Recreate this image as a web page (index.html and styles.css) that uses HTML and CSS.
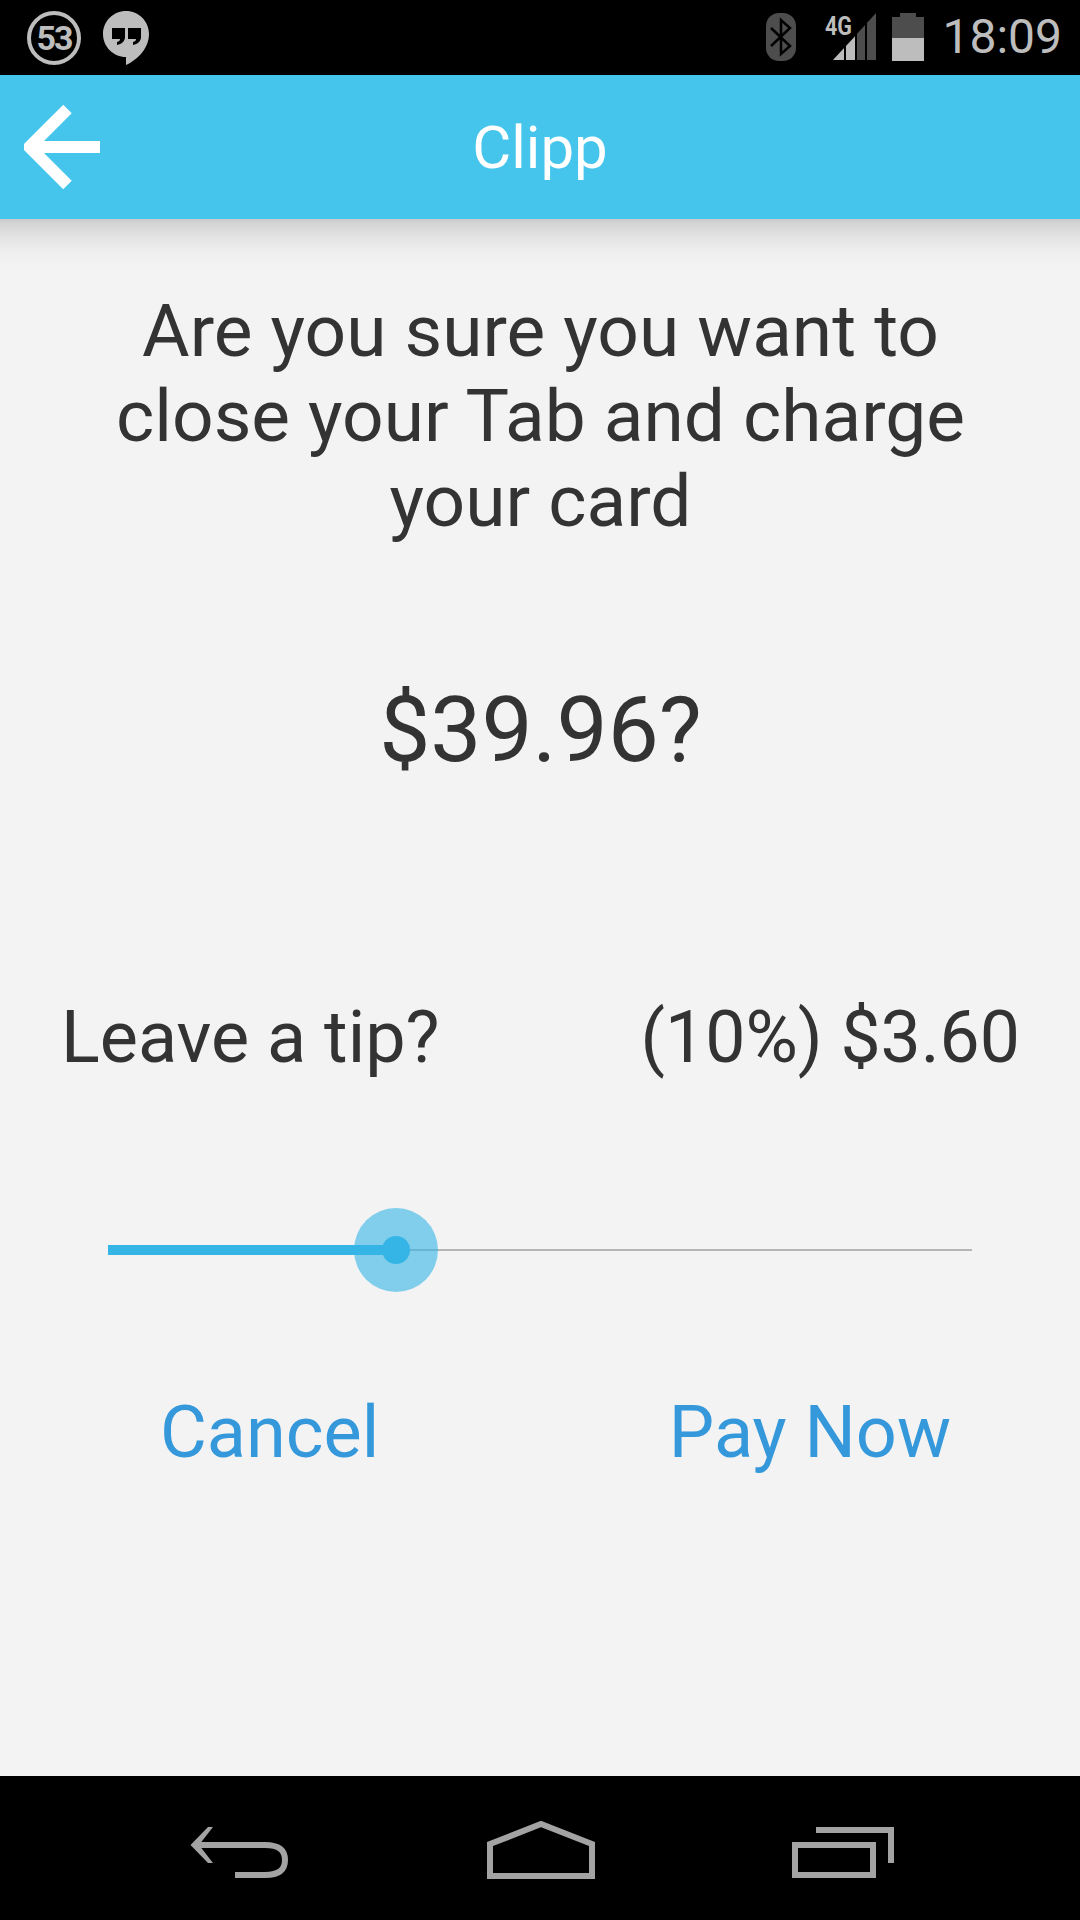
FILE: index.html
```html
<!DOCTYPE html>
<html lang="en">
<head>
    <meta charset="UTF-8" name="viewport" content="width=device-width, initial-scale=1.0">
    <title>Clipp</title>
    <link rel="stylesheet" href="styles.css">
</head>
<body>
<div class="phone">
    <!-- Status bar -->
    <div class="status-bar">
        <div class="notif-count">53</div>
        <svg class="hangouts" width="46" height="54" viewBox="0 0 46 54">
            <path fill="#bdbdbd" d="M23 0C10.300 0 0 10.300 0 23s10.300 23 23 23v8c12-5.500 23-17 23-31C46 10.300 35.700 0 23 0z"/>
            <path fill="#000" d="M9 17h13v9c0 4-3 7-8 8v-3c2-.5 3-1.500 3-3H9zM25 17h13v9c0 4-3 7-8 8v-3c2-.5 3-1.500 3-3h-8z"/>
        </svg>
        <div class="status-right">
            <svg class="bluetooth" width="30" height="48" viewBox="0 0 30 48">
                <rect width="30" height="48" rx="13" fill="#4d4d4d"/>
                <path fill="none" stroke="#000" stroke-width="2.500" d="M5 15l19 18-9 8V7l9 8-19 18"/>
            </svg>
            <svg class="signal" width="52" height="48" viewBox="0 0 52 48">
                <text class="net-type" x="1" y="22" textLength="27" lengthAdjust="spacingAndGlyphs">4G</text>
                <path fill="#4d4d4d" d="M52 0v47H9z"/>
                <path fill="#bdbdbd" d="M9 47l22-23.500V47z"/>
                <path fill="#000" d="M20 22h2v26h-2zM31 14h2v34h-2zM41 6h2v42h-2z"/>
            </svg>
            <svg class="battery" width="32" height="48" viewBox="0 0 32 48">
                <path fill="#4d4d4d" d="M8 0h16v4h8v21H0V4h8z"/>
                <rect y="25" width="32" height="23" fill="#bdbdbd"/>
            </svg>
            <div class="clock">18:09</div>
        </div>
    </div>

    <!-- Header -->
    <div class="app-header">
        <svg class="back-arrow" width="76" height="86" viewBox="0 0 76 86">
            <path fill="none" stroke="#fff" stroke-width="12" d="M43.500 5L5.500 43l38 38M5.500 43H76"/>
        </svg>
        <div class="app-title">Clipp</div>
    </div>

    <!-- Main content -->
    <div class="content">
        <p class="question">Are you sure you want to close your Tab and charge your card</p>
        <p class="amount">$39.96?</p>
        <div class="tip-row">
            <span>Leave a tip?</span>
            <span class="tip-value">(10%) $3.60</span>
        </div>
        <div class="slider">
            <div class="slider-fill"></div>
            <div class="slider-rest"></div>
            <div class="slider-knob">
                <div class="slider-dot"></div>
            </div>
        </div>
        <div class="actions">
            <button class="action-btn">Cancel</button>
            <button class="action-btn">Pay Now</button>
        </div>
    </div>

    <!-- Nav bar -->
    <div class="nav-bar">
        <svg class="nav-low" width="100" height="51" viewBox="0 0 100 51">
            <path fill="none" stroke="#a3a3a3" stroke-width="6" d="M45 48h30c14 0 20-5 20-15s-6-15-20-15H6"/>
            <path fill="#a3a3a3" d="M18 0h5L9 18l14 18h-5L.5 18z"/>
        </svg>
        <svg width="108" height="58" viewBox="0 0 108 58">
            <path fill="none" stroke="#a3a3a3" stroke-width="6" d="M3 55V23L54 3l51 20v32z"/>
        </svg>
        <svg class="nav-low" width="102" height="51" viewBox="0 0 102 51">
            <path fill="none" stroke="#a3a3a3" stroke-width="6" d="M3 18h78v30H3zM24 3h75v33"/>
        </svg>
    </div>
</div>
</body>
</html>
```

FILE: styles.css
```css
* {
    padding: 0;
    margin: 0;
    box-sizing: border-box;
    font-family: "Roboto", sans-serif;
}

body {
    width: 1080px;
    height: 1920px;
    background-color: #f3f3f4;
}

.phone {
    height: 1920px;
    display: flex;
    flex-direction: column;
}

.status-bar {
    height: 75px;
    flex-shrink: 0;
    background-color: #000;
    display: flex;
    align-items: flex-start;
    padding: 11px 18px 0 27px;
}

.notif-count {
    width: 54px;
    height: 54px;
    border: 4px solid #bdbdbd;
    border-radius: 50%;
    color: #bdbdbd;
    font-size: 34px;
    font-weight: 700;
    letter-spacing: -2px;
    line-height: 46px;
    text-align: center;
}

.hangouts {
    margin-left: 22px;
}

.status-right {
    margin-left: auto;
    display: flex;
    align-items: flex-start;
    padding-top: 2px;
}

.signal {
    margin-left: 28px;
}

.net-type {
    font-family: "Roboto", sans-serif;
    font-size: 25px;
    font-weight: 700;
    fill: #bdbdbd;
}

.battery {
    margin-left: 16px;
}

.clock {
    margin-left: 18px;
    color: #bdbdbd;
    font-size: 48px;
    line-height: 48px;
}

.app-header {
    height: 144px;
    flex-shrink: 0;
    background-color: #46c5ec;
    position: relative;
    display: flex;
    align-items: center;
    justify-content: center;
}

/* Shadow under the header */
.app-header::after {
    content: "";
    position: absolute;
    left: 0;
    right: 0;
    top: 100%;
    height: 46px;
    background: linear-gradient(
            rgba(0, 0, 0, 0.17),
            rgba(0, 0, 0, 0.12) 5px,
            rgba(0, 0, 0, 0.06) 20px,
            rgba(0, 0, 0, 0.02) 33px,
            rgba(0, 0, 0, 0)
    );
}

.back-arrow {
    position: absolute;
    left: 24px;
    top: 29px;
}

.app-title {
    color: #fff;
    font-size: 60px;
}

.content {
    flex: 1;
    padding: 70px 60px 0 61px;
    color: #333;
}

.question {
    font-size: 73px;
    line-height: 85px;
    text-align: center;
    padding: 0 28px;
}

.amount {
    margin-top: 136px;
    font-size: 91px;
    line-height: 100px;
    text-align: center;
}

.tip-row {
    margin-top: 218px;
    display: flex;
    justify-content: space-between;
    font-size: 72px;
    line-height: 80px;
}

.tip-value {
    font-size: 71.5px;
}

.slider {
    margin: 130px 48px 0 47px;
    height: 84px;
    position: relative;
    display: flex;
    align-items: center;
}

.slider-fill {
    width: 288px;
    height: 10px;
    background-color: #35b5e6;
}

.slider-rest {
    flex: 1;
    height: 2px;
    background-color: #b5b5b5;
}

.slider-knob {
    position: absolute;
    left: 246px;
    top: 0;
    width: 84px;
    height: 84px;
    border-radius: 50%;
    background-color: rgba(53, 181, 230, 0.6);
    display: flex;
    align-items: center;
    justify-content: center;
}

.slider-dot {
    width: 28px;
    height: 28px;
    border-radius: 50%;
    background-color: #35b5e6;
}

.actions {
    margin-top: 99px;
    display: flex;
    justify-content: space-between;
    padding: 0 69px 0 99px;
}

.action-btn {
    border: none;
    background: none;
    color: #3498db;
    font-size: 72px;
    line-height: 84px;
}

.nav-bar {
    height: 144px;
    flex-shrink: 0;
    background-color: #000;
    display: flex;
    align-items: flex-start;
    justify-content: space-between;
    padding: 45px 186px 0 190px;
}

.nav-low {
    margin-top: 6px;
}
```
